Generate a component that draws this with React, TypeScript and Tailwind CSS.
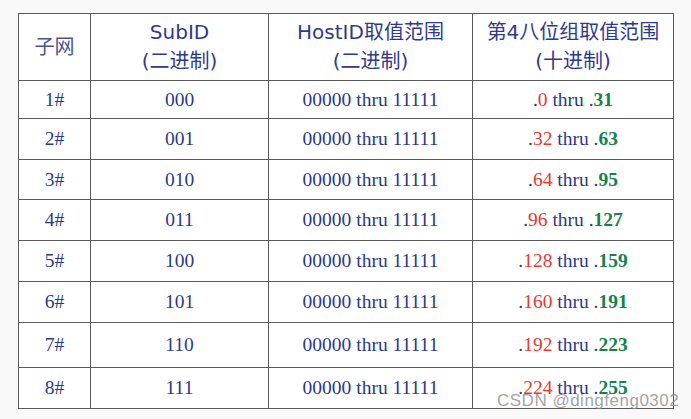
const rows = [
  { id: "1#", sub: "000", from: "0", to: "31", h: "h-[38px]" },
  { id: "2#", sub: "001", from: "32", to: "63", h: "h-[41px]" },
  { id: "3#", sub: "010", from: "64", to: "95", h: "h-[40px]" },
  { id: "4#", sub: "011", from: "96", to: "127", h: "h-[41px]" },
  { id: "5#", sub: "100", from: "128", to: "159", h: "h-[41px]" },
  { id: "6#", sub: "101", from: "160", to: "191", h: "h-[41px]" },
  { id: "7#", sub: "110", from: "192", to: "223", h: "h-[45px]" },
  { id: "8#", sub: "111", from: "224", to: "255", h: "h-[41px]" },
];

const head = "font-['DejaVu_Sans','Noto_Sans_CJK_SC',sans-serif] text-[20px] leading-[29px] text-[#2e3a8c] font-normal";
const cell = "border border-[#5a5a5a] text-center align-middle p-0";

export default function App() {
  return (
    <div className="relative w-[691px] h-[419px] bg-[#f9f9f9] pt-[13px] pl-[18px]">
      <table className="table-fixed border-collapse bg-white border border-[#888] w-[655px]">
        <colgroup>
          <col className="w-[72px]" />
          <col className="w-[178px]" />
          <col className="w-[204px]" />
          <col className="w-[201px]" />
        </colgroup>
        <thead>
          <tr className="h-[67px]">
            <th className={`${cell} ${head} text-[#4a5394]`}>子网</th>
            <th className={`${cell} ${head}`}>
              <div>SubID</div>
              <div>(二进制)</div>
            </th>
            <th className={`${cell} ${head}`}>
              <div>HostID取值范围</div>
              <div>(二进制)</div>
            </th>
            <th className={`${cell} ${head}`}>
              <div>第4八位组取值范围</div>
              <div>(十进制)</div>
            </th>
          </tr>
        </thead>
        <tbody className="font-['Liberation_Serif',serif] text-[19.5px] text-[#2b3a88]">
          {rows.map((r) => (
            <tr key={r.id} className={r.h}>
              <td className={cell}>{r.id}</td>
              <td className={cell}>{r.sub}</td>
              <td className={cell}>00000 thru 11111</td>
              <td className={cell}>
                <span className="text-[#2b3a88]">.</span>
                <span className="text-[#e53a2e]">{r.from}</span>
                <span className="text-[#2b3a88]"> thru .</span>
                <span className="font-bold text-[#14834a]">{r.to}</span>
              </td>
            </tr>
          ))}
        </tbody>
      </table>
      <div className="absolute left-[497px] top-[388px] font-['Liberation_Sans',sans-serif] text-[17px] text-[#8a8a8a]/80 tracking-[0.5px]">
        CSDN @dingfeng0302
      </div>
    </div>
  );
}
